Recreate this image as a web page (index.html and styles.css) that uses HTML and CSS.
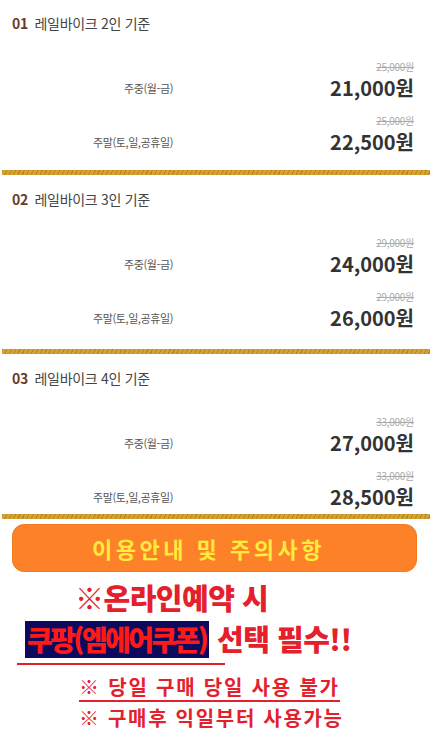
FILE: index.html
```html
<!DOCTYPE html>
<html lang="ko">
<head>
    <meta charset="UTF-8">
    <title>레일바이크 요금안내</title>
    <link rel="stylesheet" href="styles.css">
</head>
<body>
    <div class="page">
        <!-- 2인 -->
        <div class="section section-1">
            <div class="title"><span class="num">01</span> 레일바이크 2인 기준</div>
            <div class="row first">
                <span class="label">주중(월-금)</span>
                <div class="price"><del>25,000원</del><strong>21,000원</strong></div>
            </div>
            <div class="row">
                <span class="label">주말(토,일,공휴일)</span>
                <div class="price"><del>25,000원</del><strong>22,500원</strong></div>
            </div>
        </div>
        <div class="stripe"></div>

        <!-- 3인 -->
        <div class="section section-2">
            <div class="title"><span class="num">02</span> 레일바이크 3인 기준</div>
            <div class="row first">
                <span class="label">주중(월-금)</span>
                <div class="price"><del>29,000원</del><strong>24,000원</strong></div>
            </div>
            <div class="row">
                <span class="label">주말(토,일,공휴일)</span>
                <div class="price"><del>29,000원</del><strong>26,000원</strong></div>
            </div>
        </div>
        <div class="stripe"></div>

        <!-- 4인 -->
        <div class="section section-3">
            <div class="title"><span class="num">03</span> 레일바이크 4인 기준</div>
            <div class="row first">
                <span class="label">주중(월-금)</span>
                <div class="price"><del>33,000원</del><strong>27,000원</strong></div>
            </div>
            <div class="row">
                <span class="label">주말(토,일,공휴일)</span>
                <div class="price"><del>33,000원</del><strong>28,500원</strong></div>
            </div>
        </div>
        <div class="stripe"></div>

        <div class="notice-button">이용안내 및 주의사항</div>

        <div class="notice">
            <div class="notice-line big">※온라인예약 시</div>
            <div class="notice-line coupon"><span class="coupon-box">쿠팡(엠에어쿠폰)</span> 선택 필수!!</div>
            <div class="coupon-underline"></div>
            <div class="notice-line small"><span class="underlined">※ 당일 구매 당일 사용 불가</span></div>
            <div class="notice-line small second">※ 구매후 익일부터 사용가능</div>
        </div>
    </div>
</body>
</html>
```

FILE: styles.css
```css
body {
    margin: 0;
    background-color: #fff;
    font-family: "Noto Sans CJK KR", "Noto Sans", sans-serif;
}

.page {
    width: 428px;
    margin-left: 2px;
}

.section {
    padding-top: 14px;
}

.section-1 {
    padding-top: 13px;
    padding-bottom: 14px;
}

.section-2 {
    padding-bottom: 17px;
}

.section-3 {
    padding-bottom: 3px;
}

.title {
    padding-left: 10px;
    font-size: 14px;
    line-height: 20px;
    color: #444;
    letter-spacing: -0.3px;
}

.title .num {
    font-weight: 700;
    color: #6a3b2c;
    margin-right: 3px;
}

.row {
    display: grid;
    grid-template-columns: 171px 1fr;
    align-items: end;
    margin-top: 12px;
    padding-right: 16px;
}

.row.first {
    margin-top: 27px;
}

.label {
    text-align: right;
    font-size: 11px;
    line-height: 28px;
    color: #555;
    letter-spacing: -0.4px;
}

.price {
    display: flex;
    flex-direction: column;
    align-items: flex-end;
}

.price del {
    font-size: 10px;
    line-height: 14px;
    color: #aaa;
    letter-spacing: -0.3px;
}

.price strong {
    font-size: 20px;
    line-height: 28px;
    font-weight: 700;
    color: #333;
}

.stripe {
    height: 5px;
    background-color: #d6a12e;
    background-image: repeating-linear-gradient(115deg, rgba(150, 100, 20, 0.45) 0 1px, transparent 1px 4px);
}

.notice-button {
    margin: 5px 13px 0 10px;
    height: 46px;
    line-height: 46px;
    border: 1px solid #f07a1e;
    border-radius: 12px;
    background-color: #fd8128;
    color: #ffec3c;
    text-align: center;
    font-size: 22px;
    font-weight: 700;
    letter-spacing: 3.5px;
    padding-right: 12px;
}

.notice {
    color: #e3202c;
    font-weight: 900;
}

.notice-line.big {
    margin-top: 8px;
    padding-left: 73px;
    font-size: 29px;
    line-height: 34px;
    letter-spacing: -0.5px;
}

.notice-line.coupon {
    margin-top: 6px;
    padding-left: 23px;
    font-size: 29px;
    line-height: 37px;
    letter-spacing: -0.5px;
}

.coupon-box {
    display: inline-block;
    background-color: #0c0a5c;
    padding: 0 3px 0 2px;
    color: #ff1a1a;
    font-size: 28px;
    letter-spacing: -2.6px;
}

.coupon-underline {
    width: 208px;
    height: 2px;
    margin: 5px 0 0 15px;
    background-color: #e3202c;
}

.notice-line.small {
    padding-left: 77px;
    font-size: 20px;
    font-weight: 700;
    line-height: 26px;
    letter-spacing: 1.8px;
}

.underlined {
    display: inline-block;
    border-bottom: 2px solid #e3202c;
    margin-top: 9px;
}

.notice-line.second {
    margin-top: 3px;
    letter-spacing: 1.7px;
}
```
